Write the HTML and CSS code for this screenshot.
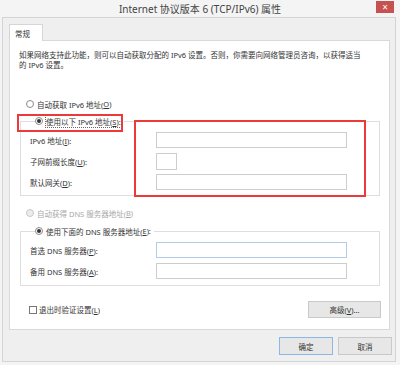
FILE: index.html
```html
<!DOCTYPE html>
<html lang="zh-CN">
  <head>
    <meta charset="UTF-8" />
    <title>Internet 协议版本 6 (TCP/IPv6) 属性</title>
    <link rel="stylesheet" href="styles.css">
  </head>
  <body>
    <div class="window">
      <div class="titlebar">
        <span class="title">Internet 协议版本 6 (TCP/IPv6) 属性</span>
        <span class="close">×</span>
      </div>
      <div class="client">
        <div class="tabs"><span class="tab">常规</span></div>
        <div class="panel">
          <p class="desc">如果网络支持此功能，则可以自动获取分配的 IPv6 设置。否则，你需要向网络管理员咨询，以获得适当的 IPv6 设置。</p>

          <label class="radio-row"><span class="radio"></span>自动获取 IPv6 地址(<u>O</u>)</label>

          <fieldset class="group group-ip">
            <legend class="radio-row"><span class="radio checked"></span><span class="focus">使用以下 IPv6 地址(<u>S</u>):</span></legend>
            <div class="field"><span class="label">IPv6 地址(<u>I</u>):</span><span class="input"></span></div>
            <div class="field"><span class="label">子网前缀长度(<u>U</u>):</span><span class="input short"></span></div>
            <div class="field"><span class="label">默认网关(<u>D</u>):</span><span class="input"></span></div>
          </fieldset>

          <label class="radio-row disabled"><span class="radio"></span>自动获得 DNS 服务器地址(<u>B</u>)</label>

          <fieldset class="group group-dns">
            <legend class="radio-row"><span class="radio checked"></span>使用下面的 DNS 服务器地址(<u>E</u>):</legend>
            <div class="field"><span class="label">首选 DNS 服务器(<u>P</u>):</span><span class="input active"></span></div>
            <div class="field"><span class="label">备用 DNS 服务器(<u>A</u>):</span><span class="input"></span></div>
          </fieldset>

          <div class="bottom-row">
            <label class="check-row"><span class="checkbox"></span>退出时验证设置(<u>L</u>)</label>
            <span class="button wide">高级(<u>V</u>)...</span>
          </div>

          <div class="mark mark-radio"></div>
          <div class="mark mark-fields"></div>
        </div>
        <div class="footer">
          <span class="button default">确定</span>
          <span class="button">取消</span>
        </div>
      </div>
    </div>
  </body>
</html>
```

FILE: styles.css
```css
* {
  box-sizing: border-box;
}

body {
  margin: 0;
  font-family: 'Noto Sans', 'Noto Sans CJK SC', sans-serif;
  font-size: 7.5px;
  color: #333;
  background: #f6f6f6;
}

.window {
  width: 400px;
  height: 365px;
  background: #f4f4f4;
}

.titlebar {
  height: 17px;
  display: flex;
  align-items: center;
  justify-content: center;
  position: relative;
}

.title {
  font-size: 10px;
  color: #444;
}

.close {
  position: absolute;
  right: 6px;
  top: 1px;
  width: 18px;
  height: 12px;
  background: #c75050;
  color: #fff;
  font-size: 10px;
  line-height: 12px;
  text-align: center;
}

.client {
  margin-left: 2px;
  width: 394px;
  height: 345px;
  border: 1px solid #d4d4d4;
  background: #efefef;
  padding: 6px 3px 0 6px;
}

.tabs {
  display: flex;
  position: relative;
  z-index: 1;
  margin-bottom: -1px;
}

.tab {
  width: 34px;
  height: 17px;
  background: #fff;
  border: 1px solid #d6d6d6;
  border-bottom: none;
  padding: 3px 0 0 5px;
}

.panel {
  position: relative;
  width: 381px;
  height: 290px;
  background: #fff;
  border: 1px solid #d9d9d9;
  padding: 9px 9px 0 9px;
}

.desc {
  margin: 0;
  line-height: 10px;
  width: 345px;
}

.radio-row {
  display: flex;
  align-items: center;
  height: 10px;
  padding-left: 7px;
}

.radio-row .radio {
  margin-right: 3px;
}

.radio {
  width: 8px;
  height: 8px;
  border: 1px solid #8a8a8a;
  border-radius: 50%;
  background: #fff;
  display: flex;
  align-items: center;
  justify-content: center;
}

.radio.checked::after {
  content: '';
  width: 4px;
  height: 4px;
  border-radius: 50%;
  background: #333;
}

.desc + .radio-row {
  margin-top: 29px;
}

.disabled {
  color: #a8a8a8;
  margin-top: 12px;
}

.disabled .radio {
  border-color: #c8c8c8;
  background: #ececec;
}

.focus {
  outline: 1px dotted #666;
  outline-offset: 0;
}

.group {
  margin: 7px 0 0 1px;
  border: 1px solid #dedede;
  padding: 6px 0 5px 9px;
  min-width: 0;
}

.group legend {
  padding: 0 3px 0 0;
  margin-left: 5px;
  padding-left: 0;
}

.group-dns {
  margin-top: 8px;
  padding-bottom: 6px;
}

.field {
  display: flex;
  align-items: center;
  height: 16px;
}

.field + .field {
  margin-top: 5px;
}

.label {
  width: 126px;
}

.input {
  width: 191px;
  height: 16px;
  border: 1px solid #cdcdcd;
  background: #fff;
}

.input.short {
  width: 21px;
  height: 17px;
}

.input.active {
  border-color: #b3cde8;
}

.bottom-row {
  display: flex;
  align-items: center;
  justify-content: space-between;
  margin-top: 15px;
  padding: 0 0 0 10px;
  margin-right: -1px;
}

.check-row {
  display: flex;
  align-items: center;
}

.checkbox {
  width: 8px;
  height: 8px;
  border: 1px solid #777;
  background: #fff;
  margin-right: 2px;
}

.button {
  display: flex;
  align-items: center;
  justify-content: center;
  width: 54px;
  height: 18px;
  background: #e7e7e7;
  border: 1px solid #c9c9c9;
}

.button.wide {
  width: 73px;
  height: 17px;
}

.button.default {
  border-color: #8cb8e6;
}

.footer {
  display: flex;
  justify-content: flex-end;
  gap: 5px;
  margin-top: 7px;
}

.mark {
  position: absolute;
  border: 2px solid #ec3a3a;
}

.mark-radio {
  left: 7px;
  top: 73px;
  width: 106px;
  height: 18px;
}

.mark-fields {
  left: 124px;
  top: 79px;
  width: 232px;
  height: 77px;
}
```
